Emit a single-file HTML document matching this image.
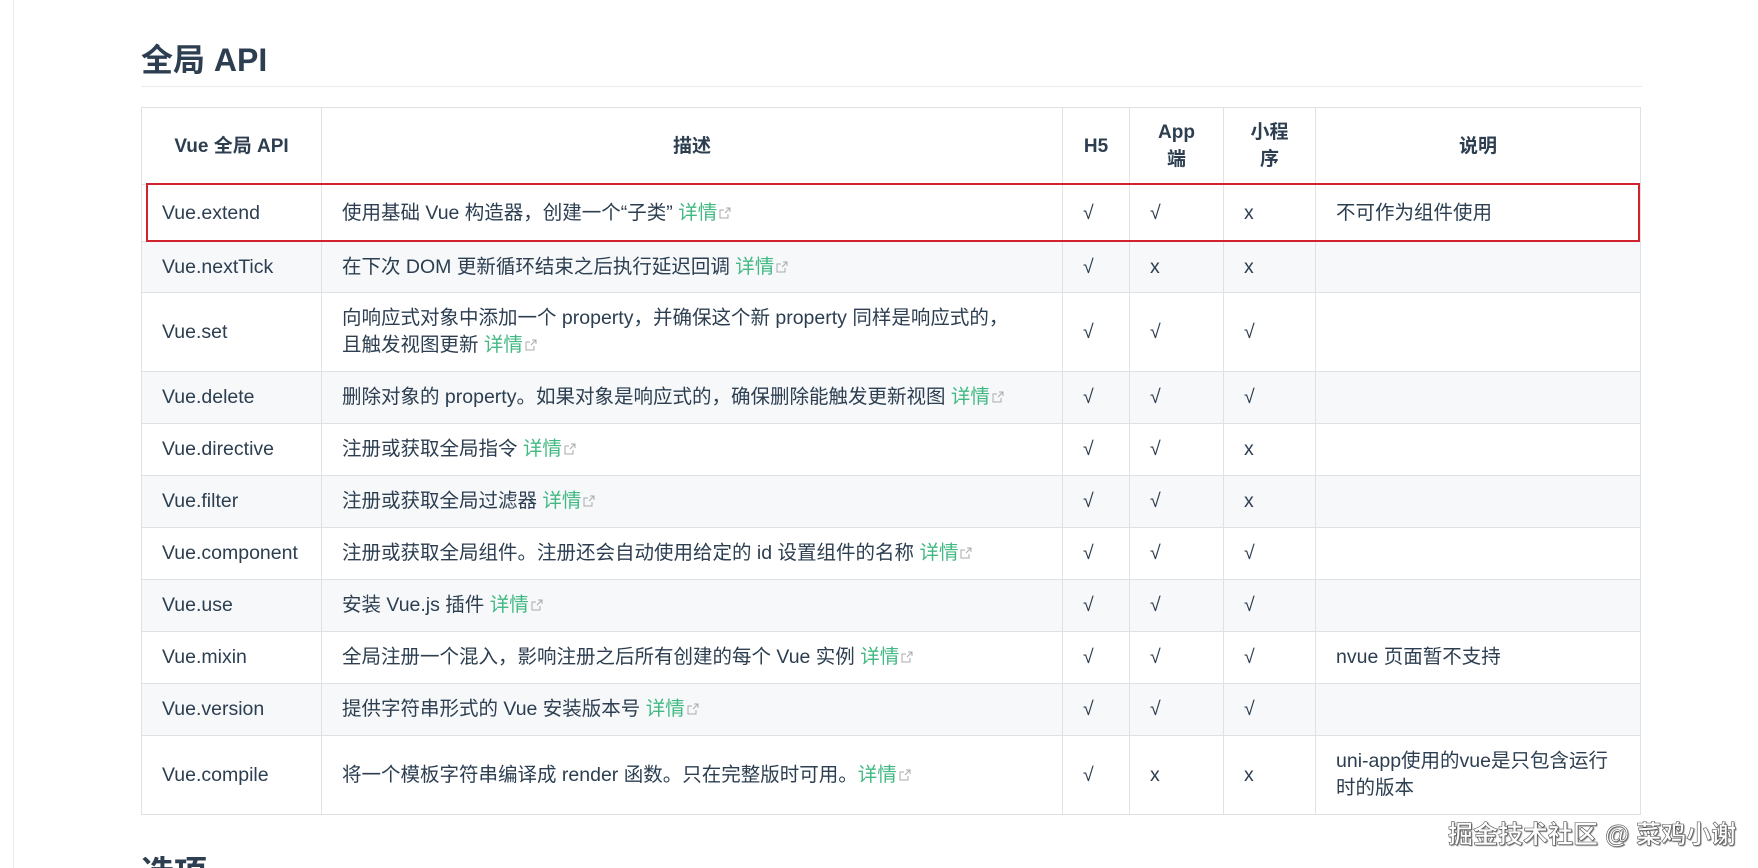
<!DOCTYPE html>
<html><head><meta charset="utf-8"><style>
html,body{margin:0;padding:0;background:#fff;width:1758px;height:868px;overflow:hidden;position:relative}
body{font-family:"Liberation Sans","Noto Sans CJK SC",sans-serif;color:#2c3e50}
.vl{position:absolute;left:13px;top:0;width:1px;height:868px;background:#eaecef}
h2{position:absolute;left:141px;top:36px;margin:0;font-size:32px;font-weight:600;line-height:48px}
.hr{position:absolute;left:141px;top:86px;width:1501px;height:1px;background:#eaecef}
table{position:absolute;left:141px;top:107px;border-collapse:collapse;font-size:19.5px;table-layout:fixed}
td,th{border:1px solid #dfe2e5;padding:0 20px;line-height:27px;text-align:left}
th{font-weight:600;text-align:center;height:76px;padding:0 10px;font-size:19px}
tr:nth-child(2n) td{background:#f6f8fa}
tbody tr{height:52px}
tr.t2{height:79px}
a{color:#42b983;text-decoration:none}
.ex{display:inline-block;width:12px;height:12px;vertical-align:0;margin-left:2px}
.red{position:absolute;left:146px;top:183px;width:1494px;height:59px;border:2px solid #d0232f;box-sizing:border-box}
.wm{position:absolute;left:1448px;top:815px;font-size:25px;color:#fff;-webkit-text-stroke:0.6px #555;text-shadow:1px 1px 1px #777;font-weight:600}
.nx{position:absolute;left:141px;top:846px;font-size:33px;font-weight:600}
</style></head><body>
<div class="vl"></div>
<h2>全局 API</h2>
<div class="hr"></div>
<table>
<colgroup><col style="width:180px"><col style="width:741px"><col style="width:67px"><col style="width:94px"><col style="width:92px"><col style="width:325px"></colgroup>
<thead><tr><th>Vue 全局 API</th><th>描述</th><th>H5</th><th>App<br>端</th><th>小程<br>序</th><th>说明</th></tr></thead>
<tbody>
<tr style="height:57px"><td>Vue.extend</td><td>使用基础 Vue 构造器，创建一个“子类” <a>详情<svg class="ex" viewBox="0 0 12 12"><path d="M7 1h4v4M11 1L6 6M9 7v4H1V3h4" fill="none" stroke="#aaa" stroke-width="1"/></svg></a></td><td>√</td><td>√</td><td>x</td><td>不可作为组件使用</td></tr>
<tr style="height:51px"><td>Vue.nextTick</td><td>在下次 DOM 更新循环结束之后执行延迟回调 <a>详情<svg class="ex" viewBox="0 0 12 12"><path d="M7 1h4v4M11 1L6 6M9 7v4H1V3h4" fill="none" stroke="#aaa"/></svg></a></td><td>√</td><td>x</td><td>x</td><td></td></tr>
<tr class="t2"><td>Vue.set</td><td>向响应式对象中添加一个 property，并确保这个新 property 同样是响应式的，<br>且触发视图更新 <a>详情<svg class="ex" viewBox="0 0 12 12"><path d="M7 1h4v4M11 1L6 6M9 7v4H1V3h4" fill="none" stroke="#aaa"/></svg></a></td><td>√</td><td>√</td><td>√</td><td></td></tr>
<tr><td>Vue.delete</td><td>删除对象的 property。如果对象是响应式的，确保删除能触发更新视图 <a>详情<svg class="ex" viewBox="0 0 12 12"><path d="M7 1h4v4M11 1L6 6M9 7v4H1V3h4" fill="none" stroke="#aaa"/></svg></a></td><td>√</td><td>√</td><td>√</td><td></td></tr>
<tr><td>Vue.directive</td><td>注册或获取全局指令 <a>详情<svg class="ex" viewBox="0 0 12 12"><path d="M7 1h4v4M11 1L6 6M9 7v4H1V3h4" fill="none" stroke="#aaa"/></svg></a></td><td>√</td><td>√</td><td>x</td><td></td></tr>
<tr><td>Vue.filter</td><td>注册或获取全局过滤器 <a>详情<svg class="ex" viewBox="0 0 12 12"><path d="M7 1h4v4M11 1L6 6M9 7v4H1V3h4" fill="none" stroke="#aaa"/></svg></a></td><td>√</td><td>√</td><td>x</td><td></td></tr>
<tr><td>Vue.component</td><td>注册或获取全局组件。注册还会自动使用给定的 id 设置组件的名称 <a>详情<svg class="ex" viewBox="0 0 12 12"><path d="M7 1h4v4M11 1L6 6M9 7v4H1V3h4" fill="none" stroke="#aaa"/></svg></a></td><td>√</td><td>√</td><td>√</td><td></td></tr>
<tr><td>Vue.use</td><td>安装 Vue.js 插件 <a>详情<svg class="ex" viewBox="0 0 12 12"><path d="M7 1h4v4M11 1L6 6M9 7v4H1V3h4" fill="none" stroke="#aaa"/></svg></a></td><td>√</td><td>√</td><td>√</td><td></td></tr>
<tr><td>Vue.mixin</td><td>全局注册一个混入，影响注册之后所有创建的每个 Vue 实例 <a>详情<svg class="ex" viewBox="0 0 12 12"><path d="M7 1h4v4M11 1L6 6M9 7v4H1V3h4" fill="none" stroke="#aaa"/></svg></a></td><td>√</td><td>√</td><td>√</td><td>nvue 页面暂不支持</td></tr>
<tr><td>Vue.version</td><td>提供字符串形式的 Vue 安装版本号 <a>详情<svg class="ex" viewBox="0 0 12 12"><path d="M7 1h4v4M11 1L6 6M9 7v4H1V3h4" fill="none" stroke="#aaa"/></svg></a></td><td>√</td><td>√</td><td>√</td><td></td></tr>
<tr class="t2"><td>Vue.compile</td><td>将一个模板字符串编译成 render 函数。只在完整版时可用。<a>详情<svg class="ex" viewBox="0 0 12 12"><path d="M7 1h4v4M11 1L6 6M9 7v4H1V3h4" fill="none" stroke="#aaa"/></svg></a></td><td>√</td><td>x</td><td>x</td><td>uni-app使用的vue是只包含运行<br>时的版本</td></tr>
</tbody></table>
<div class="red"></div>
<div class="nx">选项</div>
<div class="wm">掘金技术社区 @ 菜鸡小谢</div>
</body></html>
